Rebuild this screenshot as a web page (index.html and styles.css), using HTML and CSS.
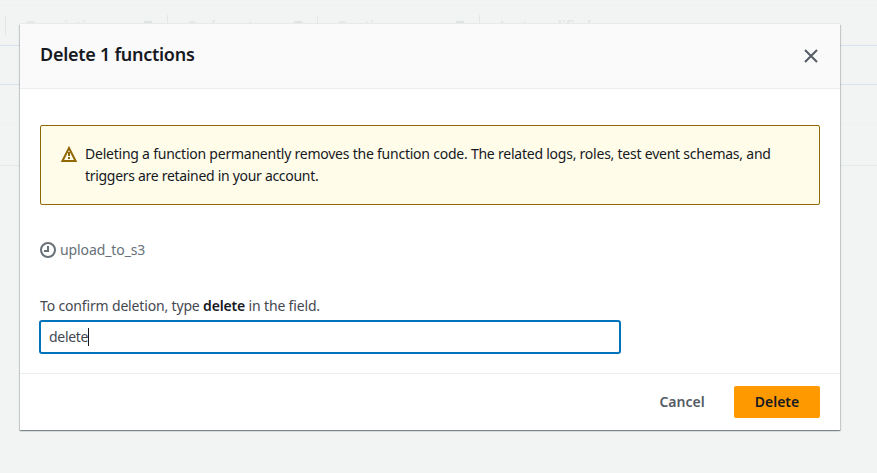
FILE: index.html
```html
<!DOCTYPE html>
<html lang="en">
<head>
<meta charset="utf-8">
<title>Delete 1 functions</title>
<link rel="stylesheet" href="styles.css">
</head>
<body>
<div class="page">
  <div class="toolbar"></div>
  <div class="columns">
    <span class="col narrow"></span>
    <span class="col wide">Description<i class="sort"></i></span>
    <span class="col medium">Package type<i class="sort"></i></span>
    <span class="col wide">Runtime<i class="sort"></i></span>
    <span class="col last">Last modified</span>
  </div>
  <div class="row selected"></div>
  <div class="row"></div>
  <div class="row end"></div>
</div>
<section class="modal" role="dialog">
  <header class="modal-header">
    <h2>Delete 1 functions</h2>
    <svg class="close" width="16" height="16" viewBox="0 0 16 16"><path d="M2 2l12 12M14 2L2 14"/></svg>
  </header>
  <div class="modal-body">
    <div class="alert">
      <svg class="warning" width="16" height="16" viewBox="0 0 16 16"><path d="M8 2L14.6 15H1.4z"/><path d="M8 6v4M8 11v2"/></svg>
      <p><span class="line first">Deleting a function permanently removes the function code. The related logs, roles, test event schemas, and</span><br><span class="line second">triggers are retained in your account.</span></p>
    </div>
    <div class="function">
      <svg class="clock" width="16" height="16" viewBox="0 0 16 16"><circle cx="8" cy="8" r="7"/><path d="M8 4v5H4"/></svg>
      <span>upload_to_s3</span>
    </div>
    <p class="label">To confirm deletion, type <b>delete</b> in the field.</p>
    <div class="input"><span>delete</span><i class="caret"></i></div>
  </div>
  <footer class="modal-footer">
    <span class="button cancel">Cancel</span>
    <span class="button primary">Delete</span>
  </footer>
</section>
</body>
</html>
```
FILE: styles.css
```css
* { box-sizing: border-box; }
body { margin: 0; background: #f2f3f3; font: 14px/22px "Noto Sans", sans-serif; color: #16191f; height: 473px; overflow: hidden; }
h2, p { margin: 0; }
svg { display: block; fill: none; flex: none; }
.toolbar { height: 6px; border-bottom: 1px solid #eff1f1; background: #f2f4f4; }
.columns { display: flex; height: 40px; padding-top: 9px; border-bottom: 1px solid #d5e4ee; background: #f2f4f4; color: #e3e5e5; font-weight: 600; letter-spacing: -.15px; line-height: 22px; }
.col { display: flex; justify-content: space-between; height: 20px; padding: 0 14px 0 20px; border-right: 1px solid #e3e6e6; white-space: nowrap; }
.narrow { width: 6px; padding: 0; }
.wide { width: 162px; }
.medium { width: 150px; }
.last { border: 0; }
.sort { margin-top: 6px; width: 10px; height: 0; border: 5px solid transparent; border-top: 7px solid #e0e3e3; border-bottom: 0; border-radius: 2px; }
.row { height: 40px; border-bottom: 1px solid #eff0f0; }
.row.selected { height: 39px; border-color: #d5e4ee; }
.row.end { height: 41px; border-color: #e6e9e9; }
.modal { position: absolute; left: 20px; top: 24px; width: 820px; height: 406px; background: #fff; display: flex; flex-direction: column; box-shadow: 0 1px 1px 0 rgba(0,28,36,.3), 1px 1px 1px 0 rgba(0,28,36,.15), -1px 1px 1px 0 rgba(0,28,36,.15), 0 -1px 0 0 #e6eaea; }
.modal-header { height: 65px; padding: 0 21px 0 20px; display: flex; align-items: center; justify-content: space-between; background: #fafafa; border-bottom: 1px solid #eaeded; }
h2 { font-size: 18px; line-height: 22px; font-weight: 600; letter-spacing: -.27px; padding-bottom: 4px; }
.close { stroke: #545b64; stroke-width: 2; }
.modal-body { flex: 1; padding: 36px 20px 0; }
.alert { height: 80px; border: 1px solid #906806; border-radius: 2px; background: #fffce9; display: flex; gap: 8px; padding: 17px 20px; white-space: nowrap; }
.warning { margin-top: 3px; stroke: #906806; stroke-width: 2; }
.first { letter-spacing: -.23px; }
.second { letter-spacing: -.3px; }
.function { margin-top: 34px; height: 22px; display: flex; align-items: center; gap: 4px; color: #687078; letter-spacing: -.1px; }
.clock { stroke: #687078; stroke-width: 2; }
.label { margin-top: 34px; height: 22px; color: #444850; letter-spacing: -.16px; }
.label b { color: #16191f; font-weight: 600; }
.input { margin: 3px 0 0 -1px; width: 582px; height: 34px; border: 2px solid #0073bb; border-radius: 3px; padding-left: 8px; display: flex; align-items: center; color: #444850; letter-spacing: -.3px; }
.caret { width: 1px; height: 18px; background: #16191f; }
.modal-footer { height: 57px; border-top: 1px solid #eaeded; padding: 12px 20px; display: flex; justify-content: flex-end; gap: 8px; }
.button { height: 32px; width: 86px; text-align: center; line-height: 32px; font-weight: 600; color: #545b64; }
.cancel { width: 88px; }
.primary { background: #ff9900; border-radius: 2px; color: #16191f; }
```
